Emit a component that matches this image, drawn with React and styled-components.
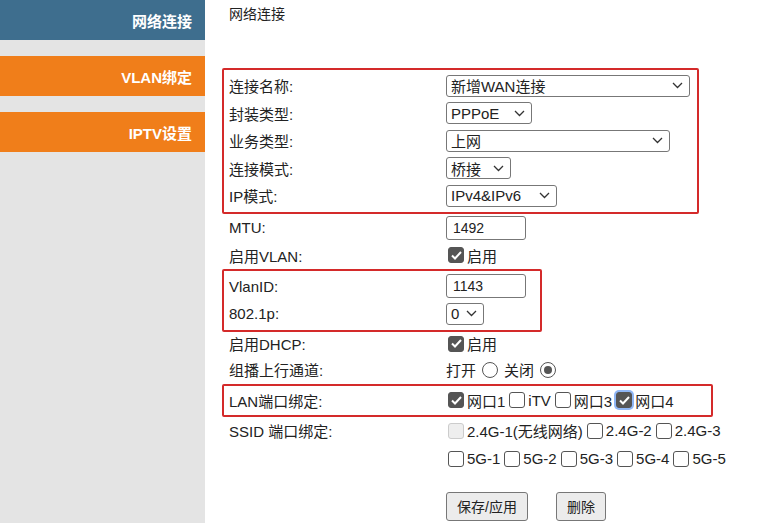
import React from "react";
import styled, { createGlobalStyle } from "styled-components";

const Global = createGlobalStyle`
  body { margin:0; font-family: "Liberation Sans", "Noto Sans CJK SC", sans-serif; color:#222; background:#fff; }
`;

const Page = styled.div`
  display:flex;
  width:770px;
  height:523px;
  overflow:hidden;
`;

const Side = styled.div`
  width:205px;
  flex-shrink:0;
  background:#e4e4e4;
  display:flex;
  flex-direction:column;
  gap:16px;
`;

const SideItem = styled.div`
  height:40px;
  background:${p => p.active ? "#3e6e8e" : "#f07e1a"};
  color:#fff;
  font-weight:bold;
  font-size:15px;
  display:flex;
  align-items:center;
  justify-content:flex-end;
  padding-right:13px;
`;

const Main = styled.div`
  flex:1;
  padding:3px 0 0 17px;
  font-size:15px;
`;

const Title = styled.div`
  padding-left:7px;
  height:65px;
  font-size:14px;
`;

const Box = styled.div`
  border:2px solid ${p => p.red ? "#d42a2a" : "transparent"};
  border-radius:2px;
  width:${p => p.w}px;
  padding:${p => p.red ? "2px 5px" : "0 5px"};
  box-sizing:border-box;
  white-space:nowrap;
  ${p => !p.red && "border-top:0; border-bottom:0;"}
`;

const Row = styled.div`
  display:flex;
  align-items:center;
  height:${p => p.h || 27.5}px;
`;

const Label = styled.div`
  width:217px;
  flex-shrink:0;
`;

const Select = styled.div`
  height:22px;
  width:${p => p.w}px;
  border:1px solid #777;
  border-radius:3px;
  box-sizing:border-box;
  display:flex;
  align-items:center;
  justify-content:space-between;
  padding:0 6px 0 4px;
  font-size:15px;
  background:#fff;
`;

const Input = styled.div`
  height:24px;
  width:${p => p.w}px;
  border:1px solid #777;
  border-radius:3px;
  box-sizing:border-box;
  padding:0 6px;
  display:flex;
  align-items:center;
  font-size:14px;
`;

const Check = styled.span`
  width:14px;
  height:14px;
  border:1px solid ${p => p.on ? "#555" : p.dis ? "#ccc" : "#555"};
  background:${p => p.on ? "#555" : p.dis ? "#eee" : "#fff"};
  border-radius:3px;
  display:inline-flex;
  align-items:center;
  justify-content:center;
  margin:0 3px 0 2px;
  box-shadow:${p => p.glow ? "0 0 0 2px #8fb6f5" : "none"};
`;

const Radio = styled.span`
  width:14px;
  height:14px;
  border:1px solid #555;
  border-radius:50%;
  display:inline-flex;
  align-items:center;
  justify-content:center;
  margin:0 6px;
  &::after{ content:""; width:8px; height:8px; border-radius:50%; background:${p => p.on ? "#555" : "transparent"}; }
`;

const Opt = styled.span`
  display:inline-flex;
  align-items:center;
  margin-right:2px;
`;

const Button = styled.div`
  height:27px;
  padding:0 10px;
  border:1px solid #777;
  border-radius:3px;
  background:#ececec;
  display:flex;
  align-items:center;
  font-size:14px;
`;

const Buttons = styled.div`
  display:flex;
  gap:28px;
  padding-left:224px;
  margin-top:19px;
`;

const Caret = () => (
  <svg width="11" height="7" viewBox="0 0 11 7"><path d="M1 1l4.5 4.5L10 1" fill="none" stroke="#333" strokeWidth="1.3"/></svg>
);

const Tick = () => (
  <svg width="11" height="9" viewBox="0 0 11 9"><path d="M1 4.5l3 3L10 1" fill="none" stroke="#fff" strokeWidth="2"/></svg>
);

const Sel = ({ w, children }) => <Select w={w}>{children}<Caret /></Select>;
const Cb = ({ on, glow, dis, children }) => (
  <Opt><Check on={on} glow={glow} dis={dis}>{on && <Tick />}</Check>{children}</Opt>
);

export default function App() {
  return (
    <Page>
      <Global />
      <Side>
        <SideItem active>网络连接</SideItem>
        <SideItem>VLAN绑定</SideItem>
        <SideItem>IPTV设置</SideItem>
      </Side>
      <Main>
        <Title>网络连接</Title>
        <Box red w={477}>
          <Row><Label>连接名称:</Label><Sel w={244}>新增WAN连接</Sel></Row>
          <Row><Label>封装类型:</Label><Sel w={86}>PPPoE</Sel></Row>
          <Row><Label>业务类型:</Label><Sel w={224}>上网</Sel></Row>
          <Row><Label>连接模式:</Label><Sel w={65}>桥接</Sel></Row>
          <Row><Label>IP模式:</Label><Sel w={111}>IPv4&IPv6</Sel></Row>
        </Box>
        <Box w={477}>
          <Row h={28}><Label>MTU:</Label><Input w={80}>1492</Input></Row>
          <Row h={27}><Label>启用VLAN:</Label><Cb on>启用</Cb></Row>
        </Box>
        <Box red w={320}>
          <Row><Label>VlanID:</Label><Input w={80}>1143</Input></Row>
          <Row><Label>802.1p:</Label><Sel w={38}>0</Sel></Row>
        </Box>
        <Box w={500}>
          <Row h={24}><Label>启用DHCP:</Label><Cb on>启用</Cb></Row>
          <Row h={28}><Label>组播上行通道:</Label>打开<Radio />关闭<Radio on /></Row>
        </Box>
        <Box red w={491}>
          <Row h={25}><Label>LAN端口绑定:</Label>
            <Cb on>网口1</Cb><Cb>iTV</Cb><Cb>网口3</Cb><Cb on glow>网口4</Cb>
          </Row>
        </Box>
        <Box w={560}>
          <Row h={28}><Label>SSID 端口绑定:</Label>
            <Cb dis>2.4G-1(无线网络)</Cb><Cb>2.4G-2</Cb><Cb>2.4G-3</Cb>
          </Row>
          <Row h={28}><Label></Label>
            <Cb>5G-1</Cb><Cb>5G-2</Cb><Cb>5G-3</Cb><Cb>5G-4</Cb><Cb>5G-5</Cb>
          </Row>
        </Box>
        <Buttons>
          <Button>保存/应用</Button>
          <Button>删除</Button>
        </Buttons>
      </Main>
    </Page>
  );
}
